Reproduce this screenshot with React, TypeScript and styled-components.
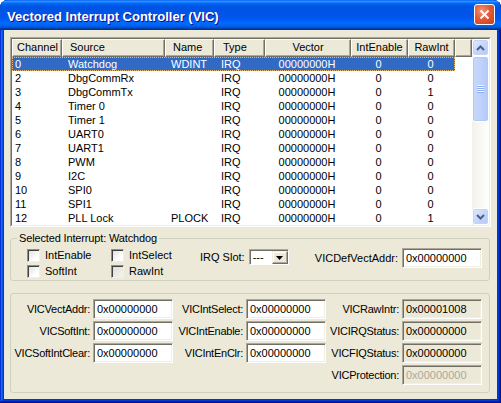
import React from "react";
import styled, { createGlobalStyle } from "styled-components";

const GlobalStyle = createGlobalStyle`
  html, body {
    margin: 0;
    padding: 0;
    background: #ffffff;
  }
  body {
    font-family: "Liberation Sans", Arial, sans-serif;
    font-size: 11px;
    color: #000;
  }
`;

type Col = { title: string; width: number; align: "left" | "center"; pad: number };

const columns: Col[] = [
  { title: "Channel", width: 50, align: "left", pad: 4 },
  { title: "Source", width: 103, align: "left", pad: 7 },
  { title: "Name", width: 49, align: "left", pad: 7 },
  { title: "Type", width: 51, align: "left", pad: 8 },
  { title: "Vector", width: 86, align: "center", pad: 0 },
  { title: "IntEnable", width: 57, align: "center", pad: 0 },
  { title: "RawInt", width: 47, align: "center", pad: 0 },
];

const rows = [
  ["0", "Watchdog", "WDINT", "IRQ", "00000000H", "0", "0"],
  ["2", "DbgCommRx", "", "IRQ", "00000000H", "0", "0"],
  ["3", "DbgCommTx", "", "IRQ", "00000000H", "0", "1"],
  ["4", "Timer 0", "", "IRQ", "00000000H", "0", "0"],
  ["5", "Timer 1", "", "IRQ", "00000000H", "0", "0"],
  ["6", "UART0", "", "IRQ", "00000000H", "0", "0"],
  ["7", "UART1", "", "IRQ", "00000000H", "0", "0"],
  ["8", "PWM", "", "IRQ", "00000000H", "0", "0"],
  ["9", "I2C", "", "IRQ", "00000000H", "0", "0"],
  ["10", "SPI0", "", "IRQ", "00000000H", "0", "0"],
  ["11", "SPI1", "", "IRQ", "00000000H", "0", "0"],
  ["12", "PLL Lock", "PLOCK", "IRQ", "00000000H", "0", "1"],
];

const registers = [
  [
    { label: "VICVectAddr:", value: "0x00000000" },
    { label: "VICIntSelect:", value: "0x00000000" },
    { label: "VICRawIntr:", value: "0x00001008", ro: true },
  ],
  [
    { label: "VICSoftInt:", value: "0x00000000" },
    { label: "VICIntEnable:", value: "0x00000000" },
    { label: "VICIRQStatus:", value: "0x00000000", ro: true },
  ],
  [
    { label: "VICSoftIntClear:", value: "0x00000000" },
    { label: "VICIntEnClr:", value: "0x00000000" },
    { label: "VICFIQStatus:", value: "0x00000000", ro: true },
  ],
];

const Window = styled.div`
  width: 501px;
  height: 403px;
  display: flex;
  flex-direction: column;
  background: #0831d9;
  border-radius: 8px 8px 0 0;
  overflow: hidden;
  box-shadow: inset -1px -1px #00138c, inset 1px 1px #0831d9,
    inset -2px -2px #001ea0, inset 2px 2px #166aee, inset -3px -3px #003bda,
    inset 3px 3px #0855dd;
`;

const TitleBar = styled.div`
  height: 30px;
  flex: none;
  display: flex;
  justify-content: space-between;
  padding: 0 6px 0 7px;
  background: linear-gradient(
    to bottom,
    #0058ee 0%,
    #3593ff 4%,
    #288eff 6%,
    #127dff 8%,
    #036ffc 10%,
    #0262ee 14%,
    #0057e5 20%,
    #0054e3 24%,
    #0055eb 56%,
    #005bf5 66%,
    #026afe 76%,
    #0062ef 86%,
    #0052d6 92%,
    #0040ab 94%,
    #003092 100%
  );
`;

const Title = styled.div`
  align-self: center;
  padding-top: 2px;
  font-family: "Liberation Sans", Arial, sans-serif;
  font-weight: bold;
  font-size: 13px;
  color: #ffffff;
  text-shadow: 1px 1px #0f1089;
  white-space: nowrap;
`;

const CloseButton = styled.div`
  margin-top: 4px;
  width: 21px;
  height: 21px;
  box-sizing: border-box;
  border: 1px solid #ffffff;
  border-radius: 3px;
  background: radial-gradient(circle at 35% 30%, #f0917a 0%, #e25b36 45%, #c8401c 100%);
  display: flex;
  align-items: center;
  justify-content: center;
`;

const Client = styled.div`
  flex: 1;
  margin: 0 4px 4px 4px;
  padding: 7px 6px 6px 6px;
  background: #ece9d8;
  display: flex;
  flex-direction: column;
`;

const ListOuter = styled.div`
  height: 190px;
  box-sizing: border-box;
  border: 1px solid;
  border-color: #aca899 #ffffff #ffffff #aca899;
`;

const ListInner = styled.div`
  height: 100%;
  box-sizing: border-box;
  border: 1px solid;
  border-color: #716f64 #f1efe2 #f1efe2 #716f64;
  background: #ffffff;
  display: flex;
`;

const TableArea = styled.div`
  flex: 1;
  display: flex;
  flex-direction: column;
`;

const HeaderRow = styled.div`
  display: flex;
  height: 18px;
  flex: none;
`;

const HeaderCell = styled.div<{ $w: number; $align: string; $pad: number }>`
  width: ${(p) => p.$w}px;
  box-sizing: border-box;
  background: #ece9d8;
  border-top: 1px solid #ffffff;
  border-left: 1px solid #ffffff;
  border-right: 1px solid #716f64;
  border-bottom: 1px solid #716f64;
  box-shadow: inset -1px -1px #aca899;
  padding-left: ${(p) => p.$pad}px;
  text-align: ${(p) => p.$align};
  line-height: 15px;
  white-space: nowrap;
  overflow: hidden;
`;

const Row = styled.div<{ $selected?: boolean }>`
  display: flex;
  height: 14px;
  line-height: 14px;
  width: 443px;
  background: ${(p) => (p.$selected ? "#316ac5" : "transparent")};
  color: ${(p) => (p.$selected ? "#ffffff" : "#000000")};
  outline: ${(p) => (p.$selected ? "1px dotted #e9b872" : "none")};
  outline-offset: -1px;
`;

const Cell = styled.div<{ $w: number; $align: string; $pad: number }>`
  width: ${(p) => p.$w}px;
  box-sizing: border-box;
  padding-left: ${(p) => p.$pad}px;
  text-align: ${(p) => p.$align};
  white-space: nowrap;
  overflow: hidden;
`;

const ScrollBar = styled.div`
  width: 17px;
  flex: none;
  display: flex;
  flex-direction: column;
  background: linear-gradient(to right, #f3f1ec, #fefefb);
`;

const ScrollButton = styled.div`
  height: 17px;
  flex: none;
  box-sizing: border-box;
  border: 1px solid #ffffff;
  border-radius: 3px;
  background: linear-gradient(135deg, #e3ebfe 0%, #c6d6fc 50%, #b5c9f6 100%);
  box-shadow: inset 0 0 0 1px #c1d3fb;
  display: flex;
  align-items: center;
  justify-content: center;
`;

const Thumb = styled.div`
  height: 66px;
  flex: none;
  box-sizing: border-box;
  border: 1px solid #ffffff;
  border-radius: 3px;
  background: linear-gradient(to right, #c9d8fc 0%, #bfd2fb 50%, #b4c9f7 100%);
  box-shadow: inset 0 0 0 1px #b4c8f6;
  display: flex;
  flex-direction: column;
  align-items: center;
  justify-content: center;
`;

const Grip = styled.div<{ $light?: boolean }>`
  width: 7px;
  height: 1px;
  background: ${(p) => (p.$light ? "#eef4fe" : "#8cb0f8")};
`;

const Track = styled.div`
  flex: 1;
`;

const GroupSet = styled.fieldset`
  margin: 5px 1px 0 0;
  padding: 2px 7px 1px 6px;
  border: 1px solid #d0d0bf;
  border-radius: 3px;
  min-width: 0;
  display: flex;
`;

const Legend = styled.legend`
  padding: 0 2px;
  line-height: 13px;
  color: #000000;
  letter-spacing: -0.15px;
`;

const CheckGrid = styled.div`
  display: grid;
  grid-template-columns: 84px 89px;
  grid-auto-rows: 16px;
  margin-left: 10px;
`;

const CheckLabel = styled.label`
  display: flex;
  align-items: center;
  gap: 5px;
  white-space: nowrap;
`;

const Box = styled.span<{ $dim?: boolean }>`
  width: 13px;
  height: 13px;
  box-sizing: border-box;
  border: 1px solid;
  border-color: #8e8f8f #f1efe2 #f1efe2 #8e8f8f;
  box-shadow: inset 1px 1px #404040;
  background: ${(p) =>
    p.$dim
      ? "linear-gradient(135deg, #e0ded2, #f4f3ee)"
      : "linear-gradient(135deg, #dcdcd7, #ffffff 70%)"};
`;

const Inline = styled.div<{ $top: number; $push?: boolean }>`
  display: flex;
  align-items: center;
  gap: 4px;
  align-self: flex-start;
  margin-top: ${(p) => p.$top}px;
  margin-left: ${(p) => (p.$push ? "auto" : "0")};
  white-space: nowrap;
`;

const Combo = styled.div`
  width: 40px;
  height: 16px;
  box-sizing: border-box;
  border: 1px solid;
  border-color: #aca899 #ffffff #ffffff #aca899;
  box-shadow: inset 1px 1px #716f64;
  background: #ffffff;
  display: flex;
  padding: 1px 0 0 1px;
`;

const ComboText = styled.div`
  flex: 1;
  padding-left: 2px;
  line-height: 13px;
`;

const ComboButton = styled.div`
  width: 16px;
  height: 13px;
  box-sizing: border-box;
  background: #ece9d8;
  border: 1px solid;
  border-color: #f1efe2 #716f64 #716f64 #f1efe2;
  box-shadow: inset -1px -1px #aca899, inset 1px 1px #ffffff;
  display: flex;
  align-items: center;
  justify-content: center;
`;

const Field = styled.div<{ $ro?: boolean; $disabled?: boolean }>`
  width: 80px;
  height: 20px;
  box-sizing: border-box;
  border: 1px solid;
  border-color: #aca899 #ffffff #ffffff #aca899;
  box-shadow: inset 1px 1px #716f64, inset -1px -1px #f1efe2;
  background: ${(p) => (p.$ro ? "#ece9d8" : "#ffffff")};
  color: ${(p) => (p.$disabled ? "#aca899" : "#000000")};
  padding-left: 3px;
  line-height: 18px;
  white-space: nowrap;
`;

const RegBox = styled.div`
  margin: 12px 1px 0 0;
  padding: 5px 7px 7px 3px;
  border: 1px solid #d0d0bf;
  border-radius: 3px;
  display: grid;
  grid-template-columns: 79px 80px 73px 80px 76px 80px;
  grid-auto-rows: 20px;
  row-gap: 2px;
`;

const RegLabel = styled.div`
  display: flex;
  align-items: center;
  justify-content: flex-end;
  padding-right: 3px;
  white-space: nowrap;
  letter-spacing: -0.25px;
`;

const Spacer = styled.div`
  grid-column: span 4;
`;

function Arrow({ up }: { up?: boolean }) {
  return (
    <svg width="9" height="6" viewBox="0 0 9 6">
      <polyline
        points={up ? "1,5 4.5,1.5 8,5" : "1,1 4.5,4.5 8,1"}
        fill="none"
        stroke="#4d6185"
        strokeWidth="2"
      />
    </svg>
  );
}

function Check({ label, dim }: { label: string; dim?: boolean }) {
  return (
    <CheckLabel>
      <Box $dim={dim} />
      {label}
    </CheckLabel>
  );
}

export default function App() {
  return (
    <>
      <GlobalStyle />
      <Window>
        <TitleBar>
          <Title>Vectored Interrupt Controller (VIC)</Title>
          <CloseButton>
            <svg width="11" height="11" viewBox="0 0 11 11">
              <path d="M1.5 1.5 L9.5 9.5 M9.5 1.5 L1.5 9.5" stroke="#fff" strokeWidth="2" />
            </svg>
          </CloseButton>
        </TitleBar>
        <Client>
          <ListOuter>
            <ListInner>
              <TableArea>
                <HeaderRow>
                  {columns.map((c) => (
                    <HeaderCell
                      key={c.title}
                      $w={c.width}
                      $align={c.align}
                      $pad={c.align === "left" ? c.pad : 0}
                    >
                      {c.title}
                    </HeaderCell>
                  ))}
                  <HeaderCell $w={17} $align="left" $pad={0} />
                </HeaderRow>
                {rows.map((r, i) => (
                  <Row key={r[0]} $selected={i === 0}>
                    {r.map((v, j) => (
                      <Cell
                        key={j}
                        $w={columns[j].width - (j === 0 ? 1 : 0)}
                        $align={columns[j].align}
                        $pad={j === 0 ? 3 : columns[j].pad}
                      >
                        {v}
                      </Cell>
                    ))}
                  </Row>
                ))}
              </TableArea>
              <ScrollBar>
                <ScrollButton>
                  <Arrow up />
                </ScrollButton>
                <Thumb>
                  <Grip $light />
                  <Grip />
                  <Grip $light />
                  <Grip />
                  <Grip $light />
                  <Grip />
                  <Grip $light />
                  <Grip />
                </Thumb>
                <Track />
                <ScrollButton>
                  <Arrow />
                </ScrollButton>
              </ScrollBar>
            </ListInner>
          </ListOuter>

          <GroupSet>
            <Legend>Selected Interrupt: Watchdog</Legend>
            <CheckGrid>
              <Check label="IntEnable" />
              <Check label="IntSelect" />
              <Check label="SoftInt" />
              <Check label="RawInt" dim />
            </CheckGrid>
            <Inline $top={2}>
              IRQ Slot:
              <Combo>
                <ComboText>---</ComboText>
                <ComboButton>
                  <svg width="7" height="4" viewBox="0 0 7 4">
                    <path d="M0 0 H7 L3.5 4 Z" fill="#000" />
                  </svg>
                </ComboButton>
              </Combo>
            </Inline>
            <Inline $top={1} $push>
              VICDefVectAddr:
              <Field>0x00000000</Field>
            </Inline>
          </GroupSet>

          <RegBox>
            {registers.map((row) =>
              row.map((r) => (
                <React.Fragment key={r.label}>
                  <RegLabel>{r.label}</RegLabel>
                  <Field $ro={r.ro}>{r.value}</Field>
                </React.Fragment>
              ))
            )}
            <Spacer />
            <RegLabel>VICProtection:</RegLabel>
            <Field $ro $disabled>
              0x00000000
            </Field>
          </RegBox>
        </Client>
      </Window>
    </>
  );
}
